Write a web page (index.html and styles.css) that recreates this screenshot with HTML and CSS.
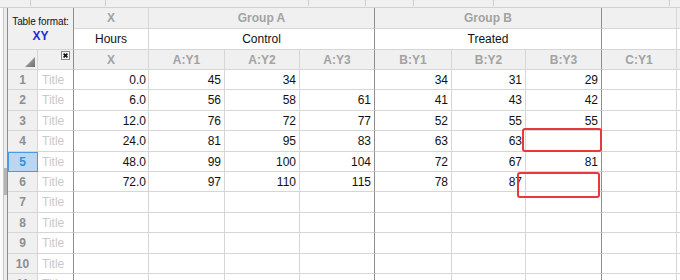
FILE: index.html
```html
<!DOCTYPE html>
<html>
<head>
<meta charset="utf-8">
<link rel="stylesheet" href="styles.css">
</head>
<body>
<div class="window">
  <div class="ruler">
    <div class="tk t1"></div><div class="tk t2"></div><div class="tk t3"></div><div class="tk t4"></div><div class="tk t5"></div><div class="tk t6"></div><div class="tk t7"></div>
  </div>
  <div class="main">
    <div class="gutter"><div class="thumb"></div></div>
    <div class="sheet">
      <!-- header row 1/2 -->
      <div class="c hd fmt dk"><span class="fmt-label">Table format:</span><span class="fmt-xy">XY</span></div>
      <div class="c hd cen">X</div>
      <div class="c hd cen spanA dk">Group A</div>
      <div class="c hd cen spanB dk">Group B</div>
      <div class="c hd"></div>
      <div class="c hd last"></div>

      <div class="c ti cen">Hours</div>
      <div class="c ti cen spanA dk">Control</div>
      <div class="c ti cen spanB dk">Treated</div>
      <div class="c ti"></div>
      <div class="c ti last"></div>

      <!-- header row 3 -->
      <div class="c hd corner"><svg width="10" height="10" viewBox="0 0 10 10"><defs><linearGradient id="g" x1="0" y1="0" x2="1" y2="1"><stop offset="0" stop-color="#b8b8b8"/><stop offset="1" stop-color="#6e6e6e"/></linearGradient></defs><polygon points="10,0 10,10 0,10" fill="url(#g)"/></svg></div>
      <div class="c hd closecell dk"><svg width="9" height="9" viewBox="0 0 9 9"><rect x="0.5" y="0.5" width="8" height="8" fill="#f4f4f4" stroke="#8a8a8a"/><path d="M2.6 2.6 L6.4 6.4 M6.4 2.6 L2.6 6.4" stroke="#111" stroke-width="1.6"/></svg></div>
      <div class="c hd cen">X</div>
      <div class="c hd cen">A:Y1</div>
      <div class="c hd cen">A:Y2</div>
      <div class="c hd cen dk">A:Y3</div>
      <div class="c hd cen">B:Y1</div>
      <div class="c hd cen">B:Y2</div>
      <div class="c hd cen dk">B:Y3</div>
      <div class="c hd cen">C:Y1</div>
      <div class="c hd last"></div>

      <!-- data rows -->
      <div class="c rn">1</div><div class="c tt dk">Title</div><div class="c n x">0.0</div><div class="c n">45</div><div class="c n">34</div><div class="c n dk"></div><div class="c n">34</div><div class="c n">31</div><div class="c n dk">29</div><div class="c n"></div><div class="c n last"></div>
      <div class="c rn">2</div><div class="c tt dk">Title</div><div class="c n x">6.0</div><div class="c n">56</div><div class="c n">58</div><div class="c n dk">61</div><div class="c n">41</div><div class="c n">43</div><div class="c n dk">42</div><div class="c n"></div><div class="c n last"></div>
      <div class="c rn">3</div><div class="c tt dk">Title</div><div class="c n x">12.0</div><div class="c n">76</div><div class="c n">72</div><div class="c n dk">77</div><div class="c n">52</div><div class="c n">55</div><div class="c n dk">55</div><div class="c n"></div><div class="c n last"></div>
      <div class="c rn">4</div><div class="c tt dk">Title</div><div class="c n x">24.0</div><div class="c n">81</div><div class="c n">95</div><div class="c n dk">83</div><div class="c n">63</div><div class="c n">63</div><div class="c n dk"></div><div class="c n"></div><div class="c n last"></div>
      <div class="c rn sel">5</div><div class="c tt dk">Title</div><div class="c n x">48.0</div><div class="c n">99</div><div class="c n">100</div><div class="c n dk">104</div><div class="c n">72</div><div class="c n">67</div><div class="c n dk">81</div><div class="c n"></div><div class="c n last"></div>
      <div class="c rn">6</div><div class="c tt dk">Title</div><div class="c n x">72.0</div><div class="c n">97</div><div class="c n">110</div><div class="c n dk">115</div><div class="c n">78</div><div class="c n">87</div><div class="c n dk"></div><div class="c n"></div><div class="c n last"></div>
      <div class="c rn">7</div><div class="c tt dk">Title</div><div class="c n x"></div><div class="c n"></div><div class="c n"></div><div class="c n dk"></div><div class="c n"></div><div class="c n"></div><div class="c n dk"></div><div class="c n"></div><div class="c n last"></div>
      <div class="c rn">8</div><div class="c tt dk">Title</div><div class="c n x"></div><div class="c n"></div><div class="c n"></div><div class="c n dk"></div><div class="c n"></div><div class="c n"></div><div class="c n dk"></div><div class="c n"></div><div class="c n last"></div>
      <div class="c rn">9</div><div class="c tt dk">Title</div><div class="c n x"></div><div class="c n"></div><div class="c n"></div><div class="c n dk"></div><div class="c n"></div><div class="c n"></div><div class="c n dk"></div><div class="c n"></div><div class="c n last"></div>
      <div class="c rn">10</div><div class="c tt dk">Title</div><div class="c n x"></div><div class="c n"></div><div class="c n"></div><div class="c n dk"></div><div class="c n"></div><div class="c n"></div><div class="c n dk"></div><div class="c n"></div><div class="c n last"></div>
      <div class="c rn">11</div><div class="c tt dk">Title</div><div class="c n x"></div><div class="c n"></div><div class="c n"></div><div class="c n dk"></div><div class="c n"></div><div class="c n"></div><div class="c n dk"></div><div class="c n"></div><div class="c n last"></div>
    </div>
  </div>
  <div class="mark m1"></div>
  <div class="mark m2"></div>
</div>
</body>
</html>
```

FILE: styles.css
```css
* { box-sizing: border-box; }
html, body { margin: 0; padding: 0; }
body {
  width: 680px;
  height: 280px;
  overflow: hidden;
  background: #ffffff;
  font-family: "Liberation Sans", Arial, sans-serif;
  font-size: 12px;
  color: #111;
}
.window {
  position: relative;
  width: 680px;
  height: 280px;
  overflow: hidden;
}
.ruler {
  height: 8px;
  display: flex;
  background: #f0f0f0;
  border-bottom: 1px solid #d2d2d2;
}
.tk { height: 6px; border-right: 1px solid #cfcfcf; flex: none; }
.t1 { width: 31px; }
.t2 { width: 75px; }
.t3 { width: 203px; }
.t4 { width: 57px; }
.t5 { width: 48px; }
.t6 { width: 80px; }
.t7 { width: 176px; }

.main { display: flex; }
.gutter {
  width: 8px;
  flex: none;
  height: 272px;
  background: linear-gradient(to right, #fafafa 0 3px, #c8c8c8 3px 4px, #ececec 4px 7px, #8c8c8c 7px 8px);
  padding-left: 4px;
  padding-top: 160px;
}
.thumb { width: 3px; height: 27px; background: #b4b4b4; }

.sheet {
  flex: none;
  display: grid;
  grid-template-columns: 30px 36px 75px 76px 75px 75px 77px 74px 76px 75px 40px;
  grid-template-rows: 21px 21px 20px 20px 21px 20px 21px 20px 20px 21px 20px 21px 20px 20px;
}
.c {
  border-right: 1px solid #d6d6d6;
  border-bottom: 1px solid #d6d6d6;
  display: flex;
  align-items: center;
  overflow: hidden;
  white-space: nowrap;
  line-height: 1;
}
.c.dk { border-right-color: #8e8e8e; }
.cen { justify-content: center; }
.hd {
  background: #f0f0f0;
  color: #a2a2a2;
  font-weight: bold;
}
.ti { background: #fff; color: #111; }
.last { border-right: none; }
.spanA { grid-column: span 3; }
.spanB { grid-column: span 3; }
.fmt {
  grid-column: 1 / 3;
  grid-row: 1 / 3;
  flex-direction: column;
  justify-content: center;
  align-items: center;
  gap: 3px;
  padding-top: 2px;
  font-weight: normal;
  color: #111;
}
.fmt-label { font-size: 10px; letter-spacing: -0.1px; }
.fmt-xy { font-size: 12px; color: #1f2bd6; font-weight: bold; }
.corner {
  justify-content: flex-end;
  align-items: flex-end;
  padding: 0 2px 2px 0;
}
.corner svg { display: block; }
.closecell {
  justify-content: flex-end;
  align-items: flex-start;
  padding: 1px 3px 0 0;
}
.closecell svg { display: block; }

.rn {
  background: #f0f0f0;
  color: #8e8e8e;
  font-weight: bold;
  justify-content: center;
}
.rn.sel {
  background: #b9d7f3;
  color: #3a8be0;
  border-right-color: #4a98e6;
  border-bottom-color: #4a98e6;
  box-shadow: inset 1px 1px 0 #4a98e6;
}
.tt {
  color: #c9c9c9;
  padding-left: 4px;
}
.n {
  justify-content: flex-end;
  padding-right: 3px;
}
.n.x { padding-right: 2px; }

.mark {
  position: absolute;
  border: 2px solid #e8383c;
  border-radius: 3px;
}
.m1 { left: 522px; top: 128px; width: 80px; height: 24px; }
.m2 { left: 517px; top: 172px; width: 83px; height: 26px; }
```
